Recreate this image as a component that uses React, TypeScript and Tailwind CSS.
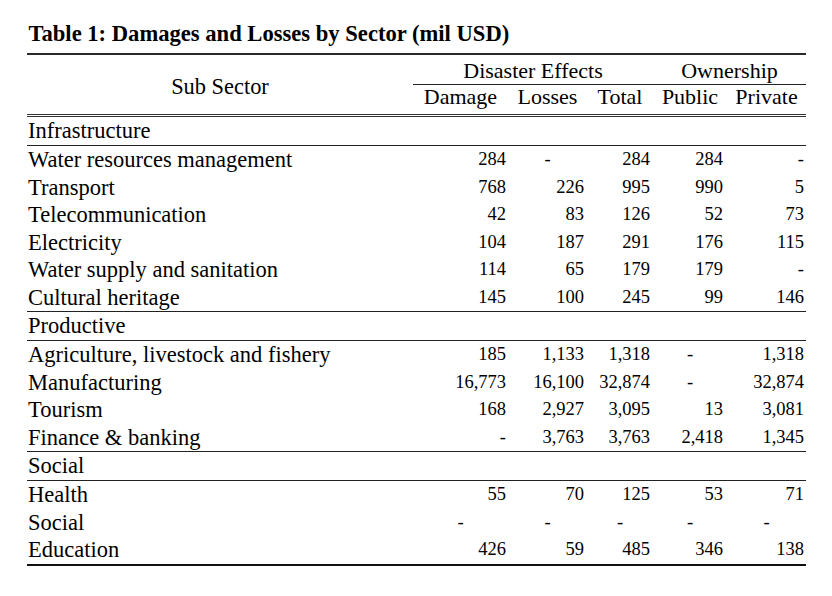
import React from "react";

type Cell = string; // "c-" centered dash, "-" right dash, else number

type Row = { label: string; values: Cell[] };
type Section = { name: string; rows: Row[] };

const sections: Section[] = [
  {
    name: "Infrastructure",
    rows: [
      { label: "Water resources management", values: ["284", "c-", "284", "284", "-"] },
      { label: "Transport", values: ["768", "226", "995", "990", "5"] },
      { label: "Telecommunication", values: ["42", "83", "126", "52", "73"] },
      { label: "Electricity", values: ["104", "187", "291", "176", "115"] },
      { label: "Water supply and sanitation", values: ["114", "65", "179", "179", "-"] },
      { label: "Cultural heritage", values: ["145", "100", "245", "99", "146"] },
    ],
  },
  {
    name: "Productive",
    rows: [
      { label: "Agriculture, livestock and fishery", values: ["185", "1,133", "1,318", "c-", "1,318"] },
      { label: "Manufacturing", values: ["16,773", "16,100", "32,874", "c-", "32,874"] },
      { label: "Tourism", values: ["168", "2,927", "3,095", "13", "3,081"] },
      { label: "Finance & banking", values: ["-", "3,763", "3,763", "2,418", "1,345"] },
    ],
  },
  {
    name: "Social",
    rows: [
      { label: "Health", values: ["55", "70", "125", "53", "71"] },
      { label: "Social", values: ["c-", "c-", "c-", "c-", "c-"] },
      { label: "Education", values: ["426", "59", "485", "346", "138"] },
    ],
  },
];

const padRight = ["pr-[2px]", "pr-[3px]", "pr-[3px]", "pr-[4px]", "pr-[2px]"];

function NumCell({ v, i }: { v: Cell; i: number }) {
  if (v === "c-") {
    return <div className="text-center text-[18.5px] leading-[27.5px]">-</div>;
  }
  return <div className={"text-right text-[18.5px] leading-[27.5px] " + padRight[i]}>{v}</div>;
}

export default function App() {
  return (
    <div className="w-[832px] h-[596px] bg-white text-black [font-family:'Liberation_Serif',serif] pl-[27px]">
      <div className="pt-[22px] pl-[1.5px] text-[22.6px] leading-[24px] font-bold">
        Table 1: Damages and Losses by Sector (mil USD)
      </div>
      <div className="mt-[7px] w-[779px] border-t-2 border-b-2 border-t-[#2a2a2a] border-b-[#111]">
        <div className="grid grid-cols-[386px_95px_79px_66px_74px_79px] border-b-[3px] border-double border-b-[#333] text-[22px]">
          <div className="row-span-2 text-center leading-[24px] pt-[20px] text-[22.4px]">Sub Sector</div>
          <div className="col-span-3 text-center leading-[24px] pt-[4px] pb-[1px] border-b border-b-[#222]">
            Disaster Effects
          </div>
          <div className="col-span-2 text-center leading-[24px] pt-[4px] pb-[1px] border-b border-b-[#222]">
            Ownership
          </div>
          <div className="text-center leading-[24px] pb-[5px]">Damage</div>
          <div className="text-center leading-[24px] pb-[5px]">Losses</div>
          <div className="text-center leading-[24px] pb-[5px]">Total</div>
          <div className="text-center leading-[24px] pb-[5px]">Public</div>
          <div className="text-center leading-[24px] pb-[5px]">Private</div>
        </div>
        {sections.map((s, si) => (
          <div key={s.name} className={si < sections.length - 1 ? "border-b border-b-[#222]" : ""}>
            <div className="border-b border-b-[#222] pl-[1px] text-[22.5px] leading-[28px]">{s.name}</div>
            {s.rows.map((r) => (
              <div key={r.label} className="grid grid-cols-[386px_95px_79px_66px_74px_79px]">
                <div className="pl-[1px] text-[22.5px] leading-[27.5px] whitespace-nowrap">{r.label}</div>
                {r.values.map((v, i) => (
                  <NumCell key={i} v={v} i={i} />
                ))}
              </div>
            ))}
          </div>
        ))}
      </div>
    </div>
  );
}
